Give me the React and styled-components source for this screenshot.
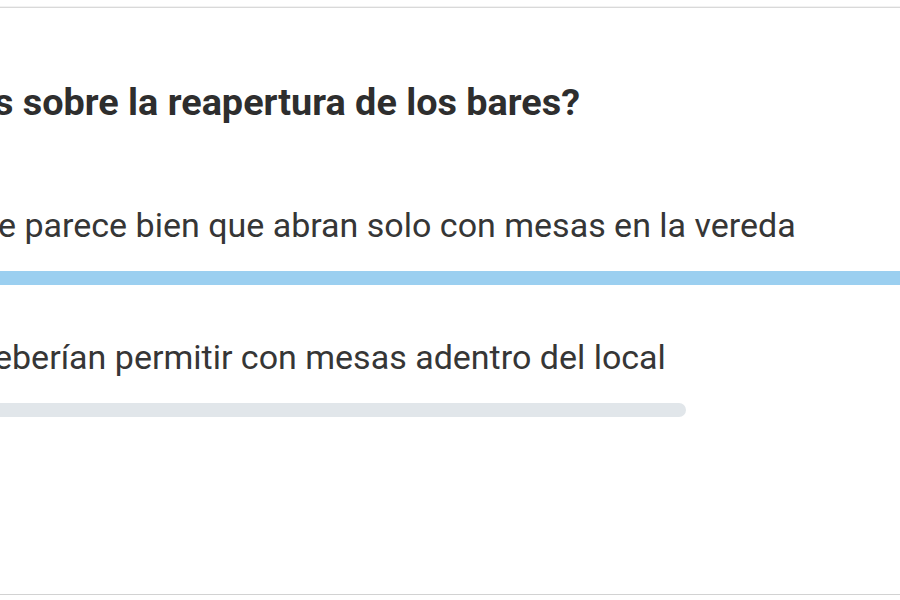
import React from "react";
import styled, { createGlobalStyle } from "styled-components";

const GlobalStyle = createGlobalStyle`
  html, body {
    margin: 0;
    padding: 0;
    background: #ffffff;
    overflow: hidden;
  }
  body {
    font-family: Roboto, "Liberation Sans", Arial, sans-serif;
  }
`;

const options = [
  { text: "e parece bien que abran solo con mesas en la vereda", shift: -2, pct: 100, leader: true },
  { text: "eberían permitir con mesas adentro del local", shift: -6, pct: 72.6, leader: false },
];

function App() {
  return (
    <>
      <GlobalStyle />
      <Card>
        <Inner>
          <Question $shift={-6}>s sobre la reapertura de los bares?</Question>
          <Options>
            {options.map((o) => (
              <Option key={o.text}>
                <Label $shift={o.shift}>{o.text}</Label>
                <Track>
                  <Fill $leader={o.leader} style={{ width: `${o.pct}%` }} />
                </Track>
              </Option>
            ))}
          </Options>
        </Inner>
      </Card>
    </>
  );
}

const Card = styled.div`
  margin-top: 7px;
  height: 586px;
  border-top: 1px solid #d9d9d9;
  border-bottom: 1px solid #d2d2d2;
  box-shadow: 0 1px 0 #f2f2f2, 0 -1px 0 #f2f2f2;
  background: #fff;
  overflow: hidden;
`;

const Inner = styled.div`
  margin-left: -40px;
  width: 1000px;
  padding-top: 74px;
  padding-left: 40px;
  box-sizing: border-box;
`;

const Question = styled.h2`
  margin: 0 0 0 ${(p) => p.$shift}px;
  font-size: 37.8px;
  line-height: 40px;
  font-weight: 700;
  color: #2e2e2e;
  white-space: nowrap;
`;

const Options = styled.div`
  display: flex;
  flex-direction: column;
  gap: 52px;
  margin-top: 83px;
  margin-left: -40px;
`;

const Option = styled.div`
  display: flex;
  flex-direction: column;
  gap: 26px;
`;

const Label = styled.div`
  margin-left: ${(p) => 40 + p.$shift}px;
  font-size: 34px;
  line-height: 40px;
  font-weight: 400;
  color: #363636;
  white-space: nowrap;
`;

const Track = styled.div`
  height: 14px;
`;

const Fill = styled.div`
  height: 100%;
  border-radius: 7px;
  background: ${(p) => (p.$leader ? "#9bcff0" : "#e1e6ea")};
`;

export default App;
